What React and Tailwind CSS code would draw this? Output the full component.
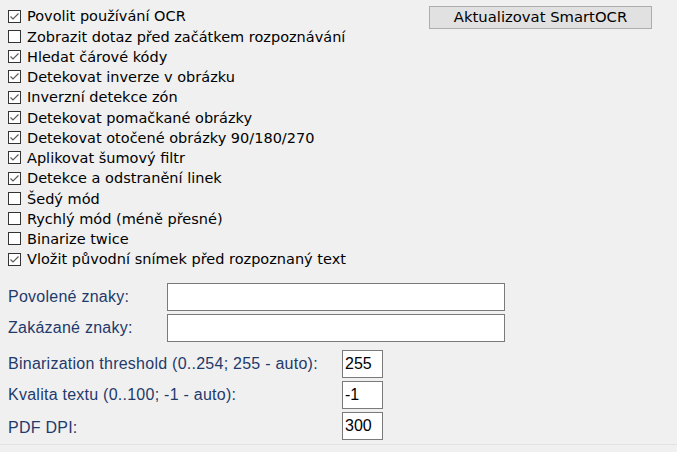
import React from 'react';

const options = [
  { label: 'Povolit používání OCR', checked: true },
  { label: 'Zobrazit dotaz před začátkem rozpoznávání', checked: false },
  { label: 'Hledat čárové kódy', checked: true },
  { label: 'Detekovat inverze v obrázku', checked: true },
  { label: 'Inverzní detekce zón', checked: true },
  { label: 'Detekovat pomačkané obrázky', checked: true },
  { label: 'Detekovat otočené obrázky 90/180/270', checked: true },
  { label: 'Aplikovat šumový filtr', checked: true },
  { label: 'Detekce a odstranění linek', checked: true },
  { label: 'Šedý mód', checked: false },
  { label: 'Rychlý mód (méně přesné)', checked: false },
  { label: 'Binarize twice', checked: false },
  { label: 'Vložit původní snímek před rozpoznaný text', checked: true },
];

function CheckBox({ checked }) {
  return (
    <svg width="13" height="13" viewBox="0 0 13 13" className="shrink-0">
      <rect x="0.5" y="0.5" width="12" height="12" fill="#ffffff" stroke="#333333" />
      {checked && (
        <path d="M2.5 6.5 L5 9 L10.5 3.5" fill="none" stroke="#5c5c5c" strokeWidth="1.2" />
      )}
    </svg>
  );
}

function NumberBox({ value }) {
  return (
    <div className="w-[41px] h-[28px] bg-white border border-[#7a7a7a] flex items-center pl-[2px] text-[16px] tracking-normal text-black">
      {value}
    </div>
  );
}

export default function App() {
  return (
    <div
      className="w-[677px] h-[452px] bg-[#f0f0f0] overflow-hidden"
      style={{ fontFamily: '"Liberation Sans", Arial, sans-serif' }}
    >
      {/* horní část: volby + tlačítko */}
      <div className="flex pl-[8px] pt-[6px] font-['DejaVu_Sans',sans-serif]">
        <div className="w-[421px] flex flex-col">
          {options.map((opt, idx) => (
            <div key={idx} className="h-[20.25px] flex items-center gap-[6px] text-[14.5px] text-black whitespace-nowrap">
              <CheckBox checked={opt.checked} />
              <span className="leading-none pt-[1px]">{opt.label}</span>
            </div>
          ))}
        </div>
        <button className="w-[223px] h-[23px] bg-[#e1e1e1] border border-[#adadad] text-[14.8px] text-black leading-none">
          Aktualizovat SmartOCR
        </button>
      </div>

      {/* spodní část: textová pole */}
      <div className="pl-[8px] pt-[14px] flex flex-col text-[16px] tracking-[0.25px] text-[#1f3a6b]">
        <div className="flex items-center h-[28px]">
          <span className="w-[159px]">Povolené znaky:</span>
          <div className="w-[338px] h-[28px] bg-white border border-[#7a7a7a]" />
        </div>
        <div className="flex items-center h-[28px] mt-[3px]">
          <span className="w-[159px]">Zakázané znaky:</span>
          <div className="w-[338px] h-[28px] bg-white border border-[#7a7a7a]" />
        </div>
        <div className="flex items-center h-[28px] mt-[8px]">
          <span className="w-[334px]">Binarization threshold (0..254; 255 - auto):</span>
          <NumberBox value="255" />
        </div>
        <div className="flex items-center h-[28px] mt-[3px]">
          <span className="w-[334px]">Kvalita textu (0..100; -1 - auto):</span>
          <NumberBox value="-1" />
        </div>
        <div className="flex items-center h-[28px] mt-[3px]">
          <span className="w-[334px] pt-[4px]">PDF DPI:</span>
          <NumberBox value="300" />
        </div>
      </div>
      <div className="mt-[4px] border-t border-[#e3e3e3] h-[1px] bg-white" />
    </div>
  );
}
